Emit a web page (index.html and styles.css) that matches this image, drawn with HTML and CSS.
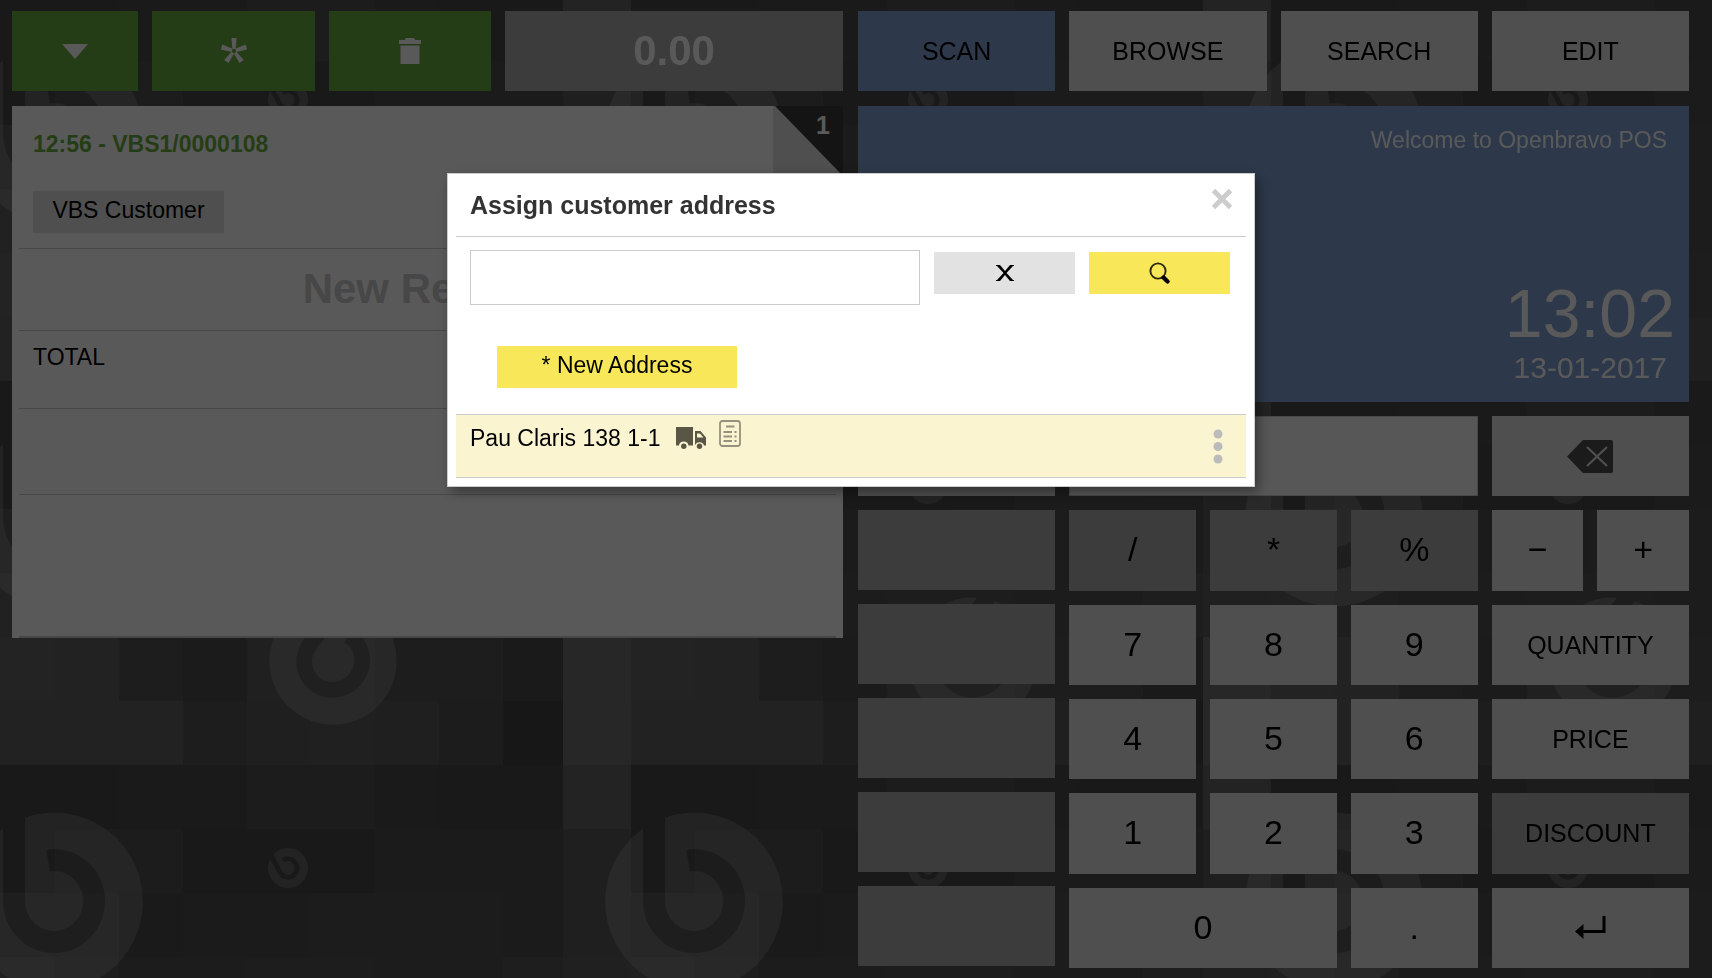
FILE: index.html
```
<!DOCTYPE html>
<html lang="en">
<head>
<meta charset="utf-8">
<title>Openbravo POS</title>
<link rel="stylesheet" href="styles.css">
</head>
<body>
<svg class="wallpaper" aria-hidden="true">
  <defs>
    <mask id="b-mask" maskUnits="userSpaceOnUse" x="-90" y="-90" width="180" height="180">
      <circle r="89" fill="#fff"/>
      <path d="M-40-92V0A40 41 0 1 0-6-41" fill="none" stroke="#000" stroke-width="22"/>
    </mask>
    <g id="b-logo"><circle r="89" fill="#fff" mask="url(#b-mask)"/></g>
    <pattern id="tile" x="-9" y="-3" width="640" height="384" patternUnits="userSpaceOnUse">
      <rect width="640" height="384" fill="#4e4e4e"/>
      <g id="row-0"><path fill="#484848" d="M0 0h128v64H0z"/><path fill="#4b4b4b" d="M128 0h128v64H128z"/><path fill="#505050" d="M256 0h128v64H256z"/><path fill="#4c4c4c" d="M384 0h64v64h-64z"/><path fill="#494949" d="M448 0h124v64H448z"/><path fill="#646464" d="M572 0h68v64h-68z"/></g>
      <g id="row-1"><path fill="#494949" d="M0 64h64v64H0z"/><path fill="#505050" d="M64 64h128v64H64z"/><path fill="#484848" d="M192 64h192v64H192z"/><path fill="#4f4f4f" d="M384 64h128v64H384z"/><path fill="#4d4d4d" d="M512 64h60v64h-60z"/><path fill="#5a5a5a" d="M572 64h68v64h-68z"/></g>
      <g id="row-2"><path fill="#565656" d="M0 128h128v64H0z"/><path fill="#4a4a4a" d="M128 128h64v64h-64z"/><path fill="#4d4d4d" d="M192 128h128v64H192z"/><path fill="#515151" d="M320 128h192v64H320z"/><path fill="#4e4e4e" d="M512 128h60v64h-60z"/><path fill="#5a5a5a" d="M572 128h68v64h-68z"/></g>
      <g id="row-3"><path fill="#606060" d="M0 192h64v64H0z"/><path fill="#585858" d="M64 192h64v64H64z"/><path fill="#505050" d="M128 192h128v64H128z"/><path fill="#535353" d="M256 192h128v64H256z"/><path fill="#505050" d="M384 192h128v64H384z"/><path fill="#575757" d="M512 192h60v64h-60z"/><path fill="#5c5c5c" d="M572 192h68v64h-68z"/></g>
      <g id="row-4"><path fill="#646464" d="M0 256h64v64H0z"/><path fill="#616161" d="M64 256h64v64H64z"/><path fill="#535353" d="M128 256h64v64h-64z"/><path fill="#4f4f4f" d="M192 256h64v64h-64z"/><path fill="#5c5c5c" d="M256 256h128v64H256z"/><path fill="#535353" d="M384 256h128v64H384z"/><path fill="#4b4b4b" d="M512 256h60v64h-60z"/><path fill="#6f6f6f" d="M572 256h68v64h-68z"/></g>
      <g id="row-5"><path fill="#626262" d="M0 320h192v64H0z"/><path fill="#535353" d="M192 320h64v64h-64z"/><path fill="#5a5a5a" d="M256 320h64v64h-64z"/><path fill="#5d5d5d" d="M320 320h64v64h-64z"/><path fill="#595959" d="M384 320h64v64h-64z"/><path fill="#515151" d="M448 320h64v64h-64z"/><path fill="#444444" d="M512 320h60v64h-60z"/><path fill="#717171" d="M572 320h68v64h-68z"/></g>
      <g opacity=".16">
        <use href="#b-logo" transform="translate(63 136.500)"/>
        <use href="#b-logo" transform="translate(703 136.500)"/>
        <use href="#b-logo" transform="translate(342 280) rotate(39) scale(.717)"/>
        <use href="#b-logo" transform="translate(297 103) rotate(-28) scale(.226)"/>
      </g>
    </pattern>
  </defs>
  <rect width="100%" height="100%" fill="url(#tile)"/>
</svg>

<main class="pos">
  <section class="side">
    <div class="toolbar">
      <button class="btn green" aria-label="Menu"><svg width="26" height="15" viewBox="0 0 26 15"><path d="M0 0h26L13 15z" fill="#fff"/></svg></button>
      <button class="btn green" aria-label="New receipt"><svg width="26" height="26" viewBox="-13 -13 26 26"><g fill="#fff"><path id="arm" d="M-2.600-13h5.200L1.600-2h-3.200z"/><use href="#arm" transform="rotate(72)"/><use href="#arm" transform="rotate(144)"/><use href="#arm" transform="rotate(216)"/><use href="#arm" transform="rotate(288)"/></g></svg></button>
      <button class="btn green" aria-label="Delete receipt"><svg width="22" height="26" viewBox="0 0 22 26"><path d="M0 2h5.500L7 0h8l1.500 2H22v4H0zM1.500 7.500h19V26h-19z" fill="#fff"/></svg></button>
      <div class="btn amount">0.00</div>
    </div>
    <article class="receipt">
      <div class="corner"><svg width="70" height="70" viewBox="0 0 70 70" aria-hidden="true"><path fill="#3a3a3a" d="M2 0h68v70z"/></svg><span>1</span></div>
      <header class="receipt-head">
        <h2>12:56 - VBS1/0000108</h2>
        <button class="customer">VBS Customer</button>
      </header>
      <div class="new-receipt">New Receipt</div>
      <div class="total">TOTAL</div>
      <div class="line-a"></div>
      <div class="line-b"></div>
    </article>
  </section>

  <section class="side">
    <nav class="tabs">
      <button class="btn blue">SCAN</button>
      <button class="btn">BROWSE</button>
      <button class="btn">SEARCH</button>
      <button class="btn">EDIT</button>
    </nav>
    <div class="welcome">
      <p>Welcome to Openbravo POS</p>
      <div><time class="clock">13:02</time><time class="date">13-01-2017</time></div>
    </div>
    <div class="pad">
      <div class="blanks">
        <button class="btn" aria-label="Function 1"></button>
        <button class="btn dim" aria-label="Function 2"></button>
        <button class="btn dim" aria-label="Function 3"></button>
        <button class="btn dim" aria-label="Function 4"></button>
        <button class="btn dim" aria-label="Function 5"></button>
        <button class="btn dim" aria-label="Function 6"></button>
      </div>
      <div class="numbers">
        <input class="entry" type="text" aria-label="Entry">
        <button class="btn dim">/</button><button class="btn dim">*</button><button class="btn dim">%</button>
        <button class="btn">7</button><button class="btn">8</button><button class="btn">9</button>
        <button class="btn">4</button><button class="btn">5</button><button class="btn">6</button>
        <button class="btn">1</button><button class="btn">2</button><button class="btn">3</button>
        <button class="btn zero">0</button><button class="btn">.</button>
      </div>
      <div class="actions">
        <button class="btn" aria-label="Backspace"><svg width="46" height="33" viewBox="0 0 46 33"><path d="M0 16.500 16 0h28q2 0 2 2v29q0 2-2 2H16z" fill="#4e4e4e"/><path d="M20 7l20 19M40 7L20 26" stroke="#e2e2e2" stroke-width="2.200"/></svg></button>
        <div class="signs"><button class="btn">−</button><button class="btn">+</button></div>
        <button class="btn">QUANTITY</button>
        <button class="btn">PRICE</button>
        <button class="btn dim">DISCOUNT</button>
        <button class="btn" aria-label="Enter"><svg width="31" height="24" viewBox="0 0 31 24"><path d="M29 0v15.500H6" fill="none" stroke="#000" stroke-width="3"/><path d="M0 15.500 8.500 8v15z"/></svg></button>
      </div>
    </div>
  </section>
</main>

<div class="backdrop">
  <div class="dialog" role="dialog" aria-modal="true" aria-labelledby="dialog-title">
    <header class="dialog-head">
      <h1 id="dialog-title">Assign customer address</h1>
      <button class="close" aria-label="Close"><svg width="22" height="22" viewBox="0 0 22 22"><path d="M2.500 2.500l17 17M19.500 2.500l-17 17" stroke="#ccc" stroke-width="4.800"/></svg></button>
    </header>
    <form class="search">
      <input type="text" aria-label="Search address">
      <button type="button" class="small grey" aria-label="Clear"><svg width="18" height="16" viewBox="0 0 18 16"><path d="M0 0h4l5 6 5-6h4v1h-1l-6.500 7 6.500 7h1v1h-4L9 10l-5 6H0v-1h1l6.500-7L1 1H0z"/></svg></button>
      <button type="button" class="small yellow" aria-label="Search"><svg width="21" height="22" viewBox="0 0 21 22"><circle cx="9" cy="9" r="7.600" fill="none" stroke="#2b280f" stroke-width="1.900"/><path d="M14.500 15.500l4 4" stroke="#000" stroke-width="4.200" stroke-linecap="round"/></svg></button>
    </form>
    <button class="small yellow new-address">* New Address</button>
    <div class="address">
      <span>Pau Claris 138 1-1</span>
      <svg class="truck" width="31" height="22" viewBox="0 0 31 22" role="img" aria-label="Shipping"><g fill="#595645"><path d="M0 0h17v18.500h-4.500a4.800 4.800 0 0 0-9.500 0H0z"/><path fill-rule="evenodd" d="M19 4h5.500L30 10.500v8h-2a4.800 4.800 0 0 0-9 0zM21 6.500v4h6.500L24 6.500z"/><circle cx="7.800" cy="19.200" r="2.700"/><circle cx="23.500" cy="19.200" r="2.700"/></g></svg>
      <svg class="invoice" width="22" height="27" viewBox="0 0 22 27" role="img" aria-label="Invoicing"><g fill="none" stroke="#96917d" stroke-width="1.800"><rect x="1" y="1" width="20" height="25" rx="2.500"/><path d="M7 6.500h8.500M4.500 12h8.500M15.500 12h2M4.500 16.500h8.500M15.500 16.500h2M4.500 21h8.500M15.500 21h2"/></g></svg>
      <button class="more" aria-label="More"><svg width="10" height="35" viewBox="0 0 10 35"><g fill="#bbb"><circle cx="5" cy="5" r="4.500"/><circle cx="5" cy="17.500" r="4.500"/><circle cx="5" cy="30" r="4.500"/></g></svg></button>
    </div>
  </div>
</div>
</body>
</html>
```
FILE: styles.css
```
* { box-sizing: border-box; }
body {
  margin: 0;
  min-height: 100vh;
  background: #4e4e4e;
  color: #000;
  font-family: "Liberation Sans", Arial, sans-serif;
  font-size: 23px;
  line-height: 26px;
  overflow: hidden;
}
h1, h2, p { margin: 0; }
button, input { font: inherit; color: inherit; border: 0; border-radius: 0; margin: 0; padding: 0; }
svg { display: block; }

.wallpaper { position: fixed; inset: 0; width: 100%; height: 100%; }

.pos {
  position: relative;
  display: grid;
  grid-template-columns: 1fr 1fr;
  gap: 15px;
  align-items: start;
  padding: 11px 23px 10px 12px;
}
.side { display: flex; flex-direction: column; }

.btn {
  display: flex;
  align-items: center;
  justify-content: center;
  min-width: 0;
  background: #e2e2e2;
  font-size: 25px;
  line-height: 30px;
}
.green { background: #6cb040; }
.blue { background: #81a3d3; }
.dim { background: #ababab; }

.toolbar, .tabs { display: grid; grid-auto-rows: 80px; gap: 14px; margin-bottom: 15px; }
.toolbar { grid-template-columns: 126fr 163fr 162fr 338fr; }
.tabs { grid-template-columns: repeat(4, 1fr); }
.amount { background: #ababab; color: #fff; font-size: 42px; font-weight: bold; }

.receipt { position: relative; padding: 0 7px; background: #fff; }
.receipt > div { border-bottom: 1px solid #ccc; }
.receipt-head { padding: 24px 14px 15px; height: 143px; border-bottom: 1px solid #ccc; }
.receipt-head h2 { color: #6cb040; font-size: 23px; line-height: 28px; }
.customer { display: block; margin-top: 33px; width: 191px; height: 42px; padding-bottom: 4px; background: #e2e2e2; }
.receipt > .corner {
  position: absolute;
  top: 0;
  right: 0;
  width: 70px;
  height: 70px;
  border: 0;
  background: #e2e2e2;
}
.corner span { position: absolute; top: 5px; right: 13px; color: #fff; font-size: 25px; line-height: 28px; font-weight: bold; }
.new-receipt { padding: 17px 0 19px; color: #ccc; font-size: 42px; line-height: 45px; font-weight: bold; text-align: center; }
.total { height: 78px; padding: 13px 14px; }
.line-a { height: 86px; }
.receipt > .line-b { height: 143px; border-bottom-width: 2px; }

.welcome {
  display: flex;
  flex-direction: column;
  justify-content: space-between;
  height: 296px;
  margin-bottom: 14px;
  padding: 21px 22px 17px;
  background: #81a3d3;
  color: #fff;
  text-align: right;
}
.clock, .date { display: block; }
.clock { font-size: 68px; line-height: 76px; margin-right: -8px; }
.date { font-size: 30px; line-height: 34px; }

.pad { display: grid; grid-template-columns: repeat(4, 1fr); gap: 14px; height: 552px; }
.blanks { display: grid; grid-auto-rows: 80px; gap: 14px; align-content: start; }
.numbers { grid-column: span 2; display: grid; grid-template-columns: repeat(3, 1fr); grid-template-rows: repeat(6, 1fr); gap: 14px; }
.numbers .btn, .signs .btn { padding-bottom: 2px; font-size: 34px; }
.entry { grid-column: span 3; min-width: 0; padding: 0 12px; border: 1px solid #ccc; background: #fafafa; }
.zero { grid-column: span 2; }
.actions { display: grid; grid-template-rows: repeat(6, 1fr); gap: 14px; }
.signs { display: grid; grid-template-columns: 1fr 1fr; gap: 14px; }

.backdrop {
  position: fixed;
  inset: 0;
  display: flex;
  justify-content: center;
  align-items: flex-start;
  padding: 173px 10px 0 0;
  background: rgba(0, 0, 0, .65);
}
.dialog {
  width: 808px;
  padding: 0 8px 8px;
  border: 1px solid #ccc;
  background: #fff;
  box-shadow: 4px 5px 12px rgba(0, 0, 0, .4);
}
.dialog-head { display: flex; justify-content: space-between; padding: 14px 13px 0 14px; height: 63px; border-bottom: 1px solid #ccc; }
.dialog-head h1 { padding-top: 2px; color: #333; font-size: 25px; line-height: 30px; }
.close { align-self: flex-start; background: none; }
.search { display: flex; align-items: flex-start; gap: 14px; padding: 13px 16px 0 14px; }
.search input { flex: 1; min-width: 0; height: 55px; padding: 0 12px; border: 1px solid #ccc; background: #fff; }
.search .small { width: 141px; margin-top: 2px; padding: 0; }
.small { display: flex; align-items: center; justify-content: center; height: 42px; padding-bottom: 4px; }
.grey { background: #e2e2e2; }
.yellow { background: #f8e859; }
.new-address { width: 240px; margin: 41px 0 26px 41px; }
.address {
  display: flex;
  align-items: flex-start;
  height: 64px;
  padding: 5px 23px 0 14px;
  border: solid #ccc;
  border-width: 1px 0;
  background: #fbf4d1;
}
.address span { padding-top: 5px; }
.truck { margin: 7px 12px 0 15px; }
.more { margin: 9px 0 0 auto; background: none; }
```
